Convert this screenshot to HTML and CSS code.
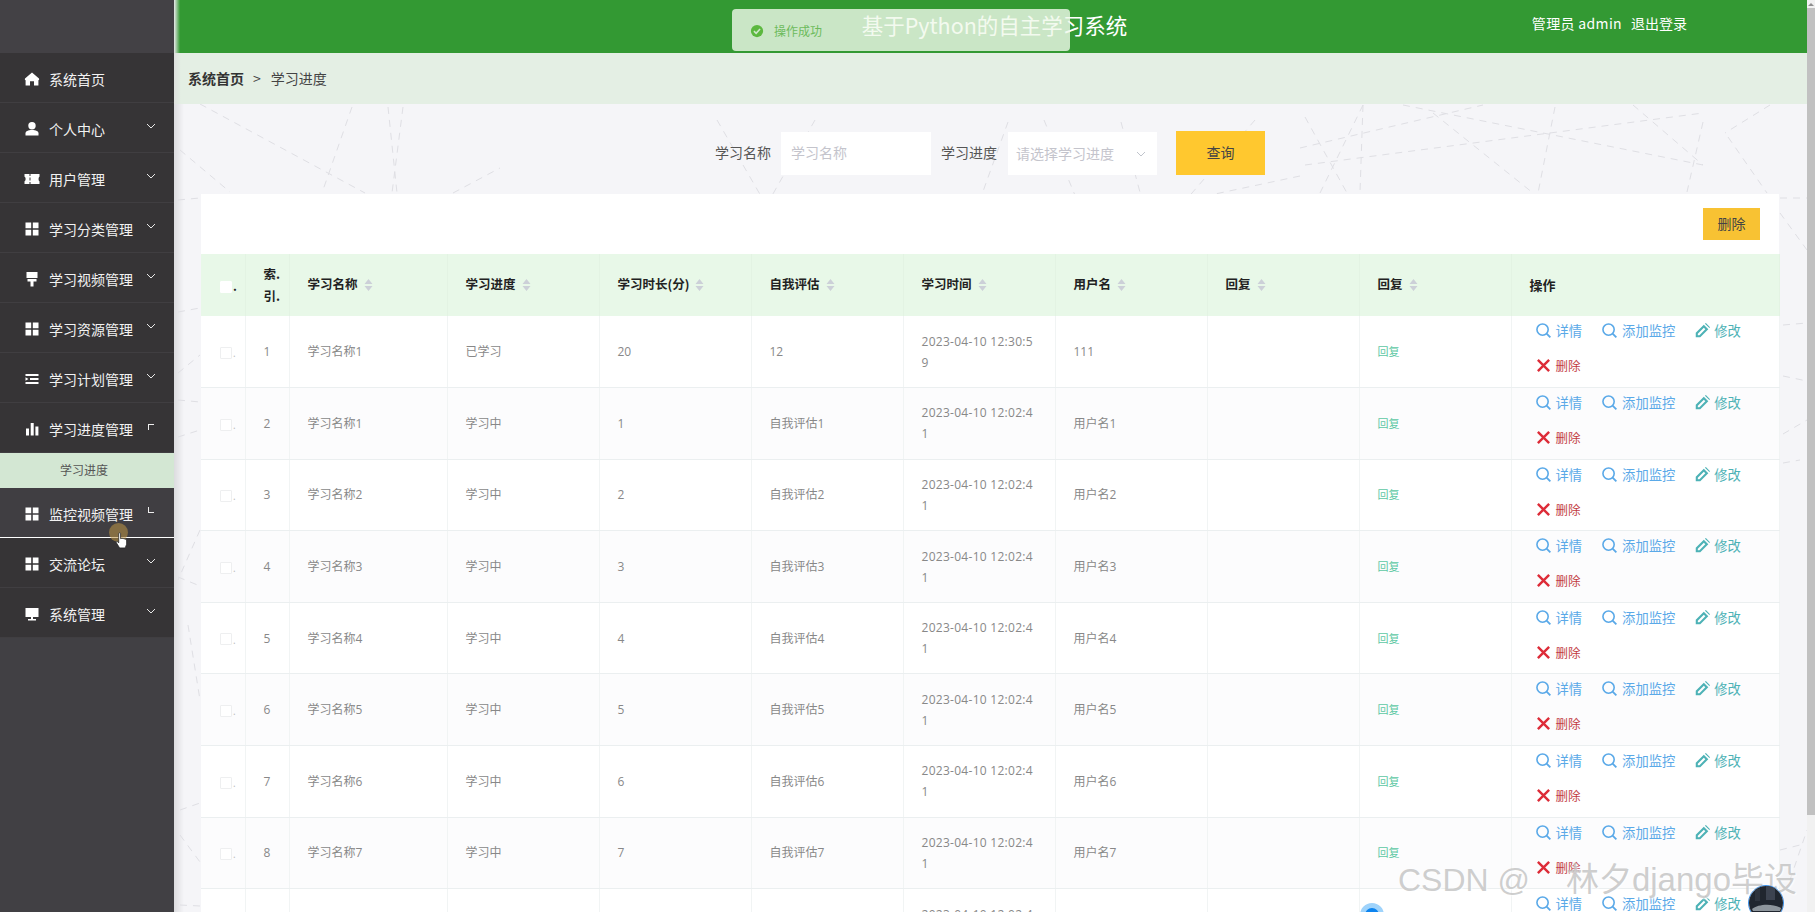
FILE: index.html
```html
<!DOCTYPE html>
<html lang="zh-CN">
<head>
<meta charset="utf-8">
<title>基于Python的自主学习系统</title>
<link rel="stylesheet" href="styles.css">
</head>
<body>
<svg class="sprite" aria-hidden="true">
  <symbol id="i-home" viewBox="0 0 16 16"><path d="M8 1.500 15 7.600c.3 1 .1 1.600-.6 1.700V14.500H10V10.200H6V14.500H1.600V9.300C.9 9.200.7 8.600 1 7.600Z"/></symbol>
  <symbol id="i-user" viewBox="0 0 16 16"><circle cx="8" cy="4.700" r="3.700"/><path d="M1.500 14.500V12.300C1.500 10.300 4 9 8 9s6.500 1.300 6.500 3.300V14.500Z"/></symbol>
  <symbol id="i-ticket" viewBox="0 0 16 16"><path d="M.500 3H5.500V5H6.500V3H15.500V5.800C14.300 6.100 14.300 9.900 15.500 10.200V13H6.500V11H5.500V13H.500V10.200C2 9.900 2 6.100 .500 5.800ZM5.500 6.500V9.500H6.500V6.500Z"/></symbol>
  <symbol id="i-grid" viewBox="0 0 16 16"><path d="M1.500 1.500H7.200V7.200H1.500ZM8.800 1.500H14.500V7.200H8.800ZM1.500 8.800H7.200V14.500H1.500ZM8.800 8.800H14.500V14.500H8.800Z"/></symbol>
  <symbol id="i-board" viewBox="0 0 16 16"><path d="M2.500 1H13.500V7H2.500ZM3.500 8H12.500V10.500H9.500V15.500H6.500V10.500H3.500Z"/></symbol>
  <symbol id="i-list" viewBox="0 0 16 16"><path d="M1.500 3H14.500V5H1.500ZM6 7H14.500V9H6ZM1.500 11H14.500V13H1.500ZM1.500 6.200 4.500 8 1.500 9.800Z"/></symbol>
  <symbol id="i-bars" viewBox="0 0 16 16"><path d="M2 7.500H5V14.500H2ZM6.700 2H9.700V14.500H6.700ZM11.400 5.500H14.400V14.500H11.400Z"/></symbol>
  <symbol id="i-screen" viewBox="0 0 16 16"><path d="M1.500 2H14.500V11H1.500ZM4 13H12V14.500H4ZM7 11H9V13H7Z"/></symbol>
  <symbol id="i-search" viewBox="0 0 16 16"><circle cx="7" cy="7" r="6" fill="none" stroke="currentColor" stroke-width="1.700"/><path d="M11.300 11.300 15.300 15.300" fill="none" stroke="currentColor" stroke-width="2"/></symbol>
  <symbol id="i-edit" viewBox="0 0 16 16"><path d="M.800 15.300V10.400L9.400 1.800 14.200 6.600 5.600 15.300ZM3 11.400V13.100H4.700L11 6.700 9.400 5ZM10.600.700 11.600 0 16 4.400 15.300 5.400Z" fill-rule="evenodd"/></symbol>
  <symbol id="i-close" viewBox="0 0 16 16"><path d="M2 2 14 14M14 2 2 14" fill="none" stroke="currentColor" stroke-width="2.600"/></symbol>
  <symbol id="i-down" viewBox="0 0 10 6"><path d="M1 1 5 5 9 1" fill="none" stroke="currentColor" stroke-width="1"/></symbol>
  <symbol id="i-sort" viewBox="0 0 8 12"><path d="M4 0 8 5H0ZM0 7H8L4 12Z"/></symbol>
</svg>

<aside class="side">
  <div class="side-top"></div>
  <nav class="menu">
    <a class="item"><svg class="ico"><use href="#i-home"/></svg><span>系统首页</span></a>
    <a class="item"><svg class="ico"><use href="#i-user"/></svg><span>个人中心</span><svg class="chev"><use href="#i-down"/></svg></a>
    <a class="item"><svg class="ico"><use href="#i-ticket"/></svg><span>用户管理</span><svg class="chev"><use href="#i-down"/></svg></a>
    <a class="item"><svg class="ico"><use href="#i-grid"/></svg><span>学习分类管理</span><svg class="chev"><use href="#i-down"/></svg></a>
    <a class="item"><svg class="ico"><use href="#i-board"/></svg><span>学习视频管理</span><svg class="chev"><use href="#i-down"/></svg></a>
    <a class="item"><svg class="ico"><use href="#i-grid"/></svg><span>学习资源管理</span><svg class="chev"><use href="#i-down"/></svg></a>
    <a class="item"><svg class="ico"><use href="#i-list"/></svg><span>学习计划管理</span><svg class="chev"><use href="#i-down"/></svg></a>
    <a class="item"><svg class="ico"><use href="#i-bars"/></svg><span>学习进度管理</span><i class="corner corner-top"></i></a>
    <a class="subitem">学习进度</a>
    <a class="item item-hover"><svg class="ico"><use href="#i-grid"/></svg><span>监控视频管理</span><i class="corner corner-bottom"></i></a>
    <a class="item"><svg class="ico"><use href="#i-grid"/></svg><span>交流论坛</span><svg class="chev"><use href="#i-down"/></svg></a>
    <a class="item"><svg class="ico"><use href="#i-screen"/></svg><span>系统管理</span><svg class="chev"><use href="#i-down"/></svg></a>
  </nav>
</aside>

<main class="main">
  <header class="top">
    <span></span>
    <h1 class="title">基于Python的自主学习系统</h1>
    <div class="account"><span>管理员 admin</span><a>退出登录</a></div>
  </header>
  <div class="crumb"><b>系统首页</b><span class="sep">&gt;</span><span>学习进度</span></div>
  <section class="content">
    <svg class="lines" viewBox="174 104 1633 808" aria-hidden="true">
      <path d="M200 104 365 193M352 107 323 190M388 107 397 193M403 107 392 193M180 150 230 192M453 193 500 168M717 120 765 203M815 120 757 222M1008 122 972 222M1044 120 1086 222M1121 122 1144 207M1255 120 1167 222M1300 176 1083 222M1305 165 1703 113M1300 148 1483 105M1403 105 1703 165M1433 113 1533 193M1555 107 1538 193M1633 105 1703 165M1703 122 1687 192M1770 105 1725 133M1728 137 1767 193M1363 105 1320 193M1363 105 1360 192M1305 117 1347 193M178 200 200 198M178 312 200 308M1780 198 1807 198M1780 213 1807 250M178 373 200 355M178 400 200 402M178 437 200 430M200 530 178 580M178 577 200 586M188 625 200 700M180 810 200 803M180 835 200 862M180 905 200 906M1783 325 1807 323M1783 376 1807 381M1783 434 1807 420M1783 463 1800 460M1790 880 1807 830M1780 850 1800 845"/>
    </svg>
    <form class="search">
      <label class="lab">学习名称</label>
      <div class="field field-name">学习名称</div>
      <label class="lab lab-2">学习进度</label>
      <div class="field field-sel"><span>请选择学习进度</span><svg class="sel-arrow"><use href="#i-down"/></svg></div>
      <button class="btn-query" type="button">查询</button>
    </form>
    <div class="card">
      <div class="toolbar"><button class="btn-del" type="button">删除</button></div>
      <table class="grid">
        <colgroup><col class="c-check"><col class="c-idx"><col class="c-name"><col class="c-std"><col class="c-std"><col class="c-std"><col class="c-std"><col class="c-std"><col class="c-std"><col class="c-std"><col class="c-ops"></colgroup>
        <thead>
          <tr>
            <th><span class="box box-head"></span><span class="dot dot-head">.</span></th>
            <th class="th-idx">索.<br>引.</th>
            <th>学习名称<svg class="sort"><use href="#i-sort"/></svg></th>
            <th>学习进度<svg class="sort"><use href="#i-sort"/></svg></th>
            <th>学习时长(分)<svg class="sort"><use href="#i-sort"/></svg></th>
            <th>自我评估<svg class="sort"><use href="#i-sort"/></svg></th>
            <th>学习时间<svg class="sort"><use href="#i-sort"/></svg></th>
            <th>用户名<svg class="sort"><use href="#i-sort"/></svg></th>
            <th>回复<svg class="sort"><use href="#i-sort"/></svg></th>
            <th>回复<svg class="sort"><use href="#i-sort"/></svg></th>
            <th class="th-ops">操作</th>
          </tr>
        </thead>
        <tbody>
          <tr><td><span class="box"></span><span class="dot">.</span></td><td>1</td><td>学习名称1</td><td>已学习</td><td>20</td><td>12</td><td class="time">2023-04-10 12:30:59</td><td>111</td><td></td><td><a class="reply">回复</a></td><td class="ops"><div class="acts"><a class="act blue"><svg class="a-ico"><use href="#i-search"/></svg>详情</a><a class="act blue"><svg class="a-ico"><use href="#i-search"/></svg>添加监控</a><a class="act teal"><svg class="a-ico"><use href="#i-edit"/></svg>修改</a><a class="act red"><svg class="a-ico"><use href="#i-close"/></svg>删除</a></div></td></tr>
          <tr><td><span class="box"></span><span class="dot">.</span></td><td>2</td><td>学习名称1</td><td>学习中</td><td>1</td><td>自我评估1</td><td class="time">2023-04-10 12:02:41</td><td>用户名1</td><td></td><td><a class="reply">回复</a></td><td class="ops"><div class="acts"><a class="act blue"><svg class="a-ico"><use href="#i-search"/></svg>详情</a><a class="act blue"><svg class="a-ico"><use href="#i-search"/></svg>添加监控</a><a class="act teal"><svg class="a-ico"><use href="#i-edit"/></svg>修改</a><a class="act red"><svg class="a-ico"><use href="#i-close"/></svg>删除</a></div></td></tr>
          <tr><td><span class="box"></span><span class="dot">.</span></td><td>3</td><td>学习名称2</td><td>学习中</td><td>2</td><td>自我评估2</td><td class="time">2023-04-10 12:02:41</td><td>用户名2</td><td></td><td><a class="reply">回复</a></td><td class="ops"><div class="acts"><a class="act blue"><svg class="a-ico"><use href="#i-search"/></svg>详情</a><a class="act blue"><svg class="a-ico"><use href="#i-search"/></svg>添加监控</a><a class="act teal"><svg class="a-ico"><use href="#i-edit"/></svg>修改</a><a class="act red"><svg class="a-ico"><use href="#i-close"/></svg>删除</a></div></td></tr>
          <tr><td><span class="box"></span><span class="dot">.</span></td><td>4</td><td>学习名称3</td><td>学习中</td><td>3</td><td>自我评估3</td><td class="time">2023-04-10 12:02:41</td><td>用户名3</td><td></td><td><a class="reply">回复</a></td><td class="ops"><div class="acts"><a class="act blue"><svg class="a-ico"><use href="#i-search"/></svg>详情</a><a class="act blue"><svg class="a-ico"><use href="#i-search"/></svg>添加监控</a><a class="act teal"><svg class="a-ico"><use href="#i-edit"/></svg>修改</a><a class="act red"><svg class="a-ico"><use href="#i-close"/></svg>删除</a></div></td></tr>
          <tr><td><span class="box"></span><span class="dot">.</span></td><td>5</td><td>学习名称4</td><td>学习中</td><td>4</td><td>自我评估4</td><td class="time">2023-04-10 12:02:41</td><td>用户名4</td><td></td><td><a class="reply">回复</a></td><td class="ops"><div class="acts"><a class="act blue"><svg class="a-ico"><use href="#i-search"/></svg>详情</a><a class="act blue"><svg class="a-ico"><use href="#i-search"/></svg>添加监控</a><a class="act teal"><svg class="a-ico"><use href="#i-edit"/></svg>修改</a><a class="act red"><svg class="a-ico"><use href="#i-close"/></svg>删除</a></div></td></tr>
          <tr><td><span class="box"></span><span class="dot">.</span></td><td>6</td><td>学习名称5</td><td>学习中</td><td>5</td><td>自我评估5</td><td class="time">2023-04-10 12:02:41</td><td>用户名5</td><td></td><td><a class="reply">回复</a></td><td class="ops"><div class="acts"><a class="act blue"><svg class="a-ico"><use href="#i-search"/></svg>详情</a><a class="act blue"><svg class="a-ico"><use href="#i-search"/></svg>添加监控</a><a class="act teal"><svg class="a-ico"><use href="#i-edit"/></svg>修改</a><a class="act red"><svg class="a-ico"><use href="#i-close"/></svg>删除</a></div></td></tr>
          <tr><td><span class="box"></span><span class="dot">.</span></td><td>7</td><td>学习名称6</td><td>学习中</td><td>6</td><td>自我评估6</td><td class="time">2023-04-10 12:02:41</td><td>用户名6</td><td></td><td><a class="reply">回复</a></td><td class="ops"><div class="acts"><a class="act blue"><svg class="a-ico"><use href="#i-search"/></svg>详情</a><a class="act blue"><svg class="a-ico"><use href="#i-search"/></svg>添加监控</a><a class="act teal"><svg class="a-ico"><use href="#i-edit"/></svg>修改</a><a class="act red"><svg class="a-ico"><use href="#i-close"/></svg>删除</a></div></td></tr>
          <tr><td><span class="box"></span><span class="dot">.</span></td><td>8</td><td>学习名称7</td><td>学习中</td><td>7</td><td>自我评估7</td><td class="time">2023-04-10 12:02:41</td><td>用户名7</td><td></td><td><a class="reply">回复</a></td><td class="ops"><div class="acts"><a class="act blue"><svg class="a-ico"><use href="#i-search"/></svg>详情</a><a class="act blue"><svg class="a-ico"><use href="#i-search"/></svg>添加监控</a><a class="act teal"><svg class="a-ico"><use href="#i-edit"/></svg>修改</a><a class="act red"><svg class="a-ico"><use href="#i-close"/></svg>删除</a></div></td></tr>
          <tr><td><span class="box"></span><span class="dot">.</span></td><td>9</td><td>学习名称8</td><td>学习中</td><td>8</td><td>自我评估8</td><td class="time">2023-04-10 12:02:41</td><td>用户名8</td><td></td><td><a class="reply">回复</a></td><td class="ops"><div class="acts"><a class="act blue"><svg class="a-ico"><use href="#i-search"/></svg>详情</a><a class="act blue"><svg class="a-ico"><use href="#i-search"/></svg>添加监控</a><a class="act teal"><svg class="a-ico"><use href="#i-edit"/></svg>修改</a><a class="act red"><svg class="a-ico"><use href="#i-close"/></svg>删除</a></div></td></tr>
        </tbody>
      </table>
    </div>
  </section>
</main>

<div class="scrollbar"><span class="sb-up"></span><span class="sb-thumb"></span></div>

<div class="toast"><svg class="toast-ico" viewBox="0 0 16 16"><circle cx="8" cy="8" r="7"/><path d="M4.500 8.200 7 10.600 11.500 5.800" fill="none" stroke="#cfe8cb" stroke-width="1.800"/></svg><span>操作成功</span></div>

<div class="pointer"><span class="halo"></span><svg class="hand" viewBox="0 0 14 18"><path d="M4 1.500C4 .500 6 .500 6 1.500V7L7.500 6.600 9.300 7 11 7.500 12.500 8.500V13L11 17H5L1.500 11.500C1 10.500 2 9.700 3 10.500L4 11.500Z" fill="#fff" stroke="#222" stroke-width=".8"/></svg></div>

<div class="mark">CSDN @ <span class="mark-name">林夕django毕设</span></div>
<div class="blue-dot"></div>
<div class="avatar"><svg viewBox="0 0 34 34"><rect width="34" height="34" fill="#20262f"/><rect x="17" y="0" width="9" height="14" fill="#3c4350"/><rect x="6" y="3" width="5" height="12" fill="#2e343e"/><path d="M3 23C9 18 23 17 32 22L31 25H4Z" fill="#8d959c"/><path d="M0 26H34V34H0Z" fill="#0e1117"/></svg></div>
</body>
</html>
```

FILE: styles.css
```css
* { box-sizing: border-box; }
html, body { margin: 0; height: 100%; }
body {
  display: flex;
  width: 1815px;
  height: 912px;
  overflow: hidden;
  font-family: "Noto Sans CJK SC", "Noto Sans", sans-serif;
  background: #f5f5f8;
}
.sprite { display: none; }

/* sidebar */
.side { width: 174px; flex: none; height: 912px; background: #414044; display: flex; flex-direction: column; }
.side-top { height: 53px; background: #434145; flex: none; }
.menu { display: flex; flex-direction: column; }
.item {
  height: 50px;
  display: flex;
  align-items: center;
  padding: 2px 18px 0 24px;
  background: #363436;
  color: #f2f2f2;
  font-size: 14px;
  line-height: 20px;
  border-bottom: 1px solid #403e41;
}
.item-hover { background: #403e42; border-bottom-color: #fff; }
.ico { width: 16px; height: 16px; fill: #fff; flex: none; margin-right: 9px; }
.chev { width: 10px; height: 6px; color: #e8e8e8; margin: -6px 0 0 auto; flex: none; }
.corner { width: 6px; height: 6px; margin-left: auto; margin-right: 2px; flex: none; }
.corner-top { border-left: 1px solid #eee; border-top: 1px solid #eee; margin-top: -3px; }
.corner-bottom { border-left: 1px solid #eee; border-bottom: 1px solid #eee; margin-top: -8px; }
.subitem {
  height: 35px;
  background: #d3e7d3;
  color: #555;
  font-size: 12px;
  line-height: 34px;
  padding-left: 60px;
}

/* main column */
.main { width: 1633px; flex: none; height: 912px; overflow: hidden; display: flex; flex-direction: column; }
.top {
  height: 53px;
  flex: none;
  display: grid;
  grid-template-columns: 1fr auto 1fr;
  align-items: center;
  padding-left: 8px;
  background: linear-gradient(90deg, #e8e8ea 0, #339933 6px);
}
.title { margin: 0 0 3px; color: #fff; font-size: 21.5px; line-height: 28px; font-weight: 400; }
.account { display: flex; gap: 9px; justify-content: flex-end; padding: 0 120px 8px 0; color: #fff; font-size: 14px; line-height: 20px; }
.account span { letter-spacing: .35px; }
.crumb {
  height: 51px;
  flex: none;
  display: flex;
  align-items: center;
  padding: 0 0 2px 14px;
  font-size: 14px;
  color: #444;
  background: linear-gradient(90deg, #dfe1df 0, #e4efe4 7px);
}
.crumb b { color: #333; font-weight: 700; }
.sep { margin: 0 10px 0 9px; }

.content { position: relative; flex: 1; min-height: 0; padding: 0 28px 0 27px; }
.content::before {
  content: "";
  position: absolute;
  left: 0;
  top: 0;
  bottom: 0;
  width: 10px;
  background: linear-gradient(90deg, #dcdcdf, rgba(245, 245, 248, 0));
}
.lines { position: absolute; left: 0; top: 0; width: 1633px; height: 808px; fill: none; stroke: #dfdfe4; stroke-width: 1; stroke-dasharray: 7 6; }

.search { position: relative; height: 90px; padding-top: 27px; display: flex; justify-content: center; align-items: flex-start; }
.lab { font-size: 14px; line-height: 42px; color: #555; width: 66px; }
.lab-2 { margin-left: 10px; width: 67px; }
.field { height: 43px; margin-top: 1px; background: #fff; color: #c4c4cc; font-size: 14px; line-height: 41px; }
.field-name { width: 150px; padding-left: 10px; }
.field-sel { width: 149px; padding: 0 11px 0 8px; display: flex; align-items: center; justify-content: space-between; }
.sel-arrow { width: 10px; height: 6px; color: #c0c4cc; }
.btn-query { width: 89px; height: 44px; margin-left: 19px; padding: 0 0 2px; border: 0; background: #ffc82f; color: #444; font: inherit; font-size: 14px; }

.card { position: relative; background: #fff; }
.toolbar { height: 60px; padding: 14px 19px 0 0; display: flex; justify-content: flex-end; align-items: flex-start; }
.btn-del { width: 57px; height: 32px; padding: 0 0 2px; border: 0; background: #f8c233; color: #444; font: inherit; font-size: 14px; }

.grid { width: 1578px; table-layout: fixed; border-collapse: collapse; }
.c-check, .c-idx { width: 44px; }
.c-name { width: 158px; }
.c-std { width: 152px; }
.c-ops { width: 268px; }
.grid th {
  height: 62px;
  padding: 0 0 2px 18px;
  text-align: left;
  font-size: 12.500px;
  line-height: 22px;
  font-weight: 700;
  color: #222;
  background: #e8f8e8;
  border-right: 1px solid #e3f3e3;
  white-space: nowrap;
}
.grid th:first-child, .grid td:first-child { padding: 0 0 0 19px; white-space: nowrap; }
.grid th.th-idx { padding-bottom: 0; }
.grid th.th-ops { font-size: 13px; padding: 0 0 0 18px; }
.sort { width: 9px; height: 12px; margin-left: 6px; fill: #ccd0d8; vertical-align: -2px; }

.box { display: inline-block; width: 12px; height: 12px; margin-right: 1px; background: #fff; border: 1px solid #eeeff0; border-radius: 1px; vertical-align: middle; }
.box-head { border-color: #fff; }
.dot { color: #bbb; font-size: 10px; line-height: 12px; vertical-align: -1px; }
.dot-head { color: #222; font-size: 12px; }

.grid td {
  height: 71.600px;
  padding: 0 18px;
  font-family: "Open Sans", "Noto Sans CJK SC", sans-serif;
  font-size: 12px;
  line-height: 21px;
  color: #888;
  border-right: 1px solid #f1f4f4;
  border-bottom: 1px solid #ebeff0;
}
.grid tbody tr:nth-child(even) td { background: #fcfcfd; }
.grid td.time { word-break: break-all; letter-spacing: .28px; padding-right: 16px; }
.reply { color: #5dc8a4; font-size: 11px; }
.grid td.ops { padding: 0 0 0 24px; vertical-align: top; }
.acts { display: flex; flex-wrap: wrap; width: 230px; margin-top: -3px; column-gap: 20px; }
.act { display: flex; align-items: center; gap: 5px; height: 35px; font-size: 13.300px; font-family: "Noto Sans CJK SC", sans-serif; }
.a-ico { width: 15px; height: 15px; fill: currentColor; flex: none; }
.blue { color: #5aa9e8; }
.teal { color: #4db2b6; gap: 4px; }
.red { color: #c23a42; font-size: 12.500px; flex-basis: 100%; }
.red .a-ico { color: #dd2c38; }

/* scrollbar */
.scrollbar { width: 8px; flex: none; height: 912px; background: #f1f1f1; display: flex; flex-direction: column; }
.sb-up { height: 8px; flex: none; display: flex; align-items: center; justify-content: center; }
.sb-up::before { content: ""; border: 3px solid transparent; border-top: 0; border-bottom: 3px solid #8f8f8f; }
.sb-thumb { height: 807px; flex: none; background: #c1c1c1; }

/* overlays */
.toast {
  position: absolute;
  left: 732px;
  top: 9px;
  width: 338px;
  height: 42px;
  display: flex;
  align-items: center;
  gap: 10px;
  padding: 0 0 0 18px;
  border-radius: 4px;
  background: rgba(240, 249, 235, .8);
  color: #6dbb5c;
  font-size: 12px;
}
.toast-ico { width: 14px; height: 14px; fill: #5cb83f; margin-top: 1px; }
.pointer { position: absolute; left: 109px; top: 523px; width: 24px; height: 28px; }
.halo { display: block; width: 19px; height: 19px; border-radius: 50%; background: rgba(190, 150, 70, .55); }
.hand { position: absolute; left: 6px; top: 9px; width: 13px; height: 17px; }
.mark {
  position: absolute;
  left: 1398px;
  top: 858px;
  font-family: "Liberation Sans", "Noto Sans CJK SC", sans-serif;
  font-size: 32px;
  line-height: 44px;
  color: rgba(185, 185, 185, .7);
  text-shadow: 1px 1px 2px rgba(255, 255, 255, .9);
  white-space: nowrap;
}
.mark-name { margin-left: 27px; font-size: 33px; }
.blue-dot { position: absolute; left: 1360px; top: 903px; width: 24px; height: 24px; border-radius: 50%; background: #0d84ef; border: 5px solid #9fd3fb; }
.avatar { position: absolute; left: 1748px; top: 885px; width: 36px; height: 36px; border-radius: 50%; overflow: hidden; border: 1px solid #3a8ee6; }
.avatar svg { display: block; width: 100%; height: 100%; }
```
